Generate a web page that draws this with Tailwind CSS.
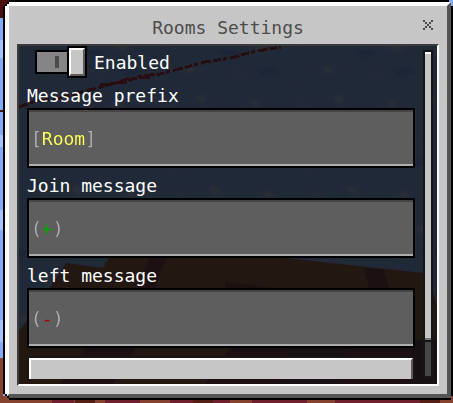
<!DOCTYPE html>
<html lang="en">
<head>
<meta charset="utf-8">
<title>Rooms Settings</title>
<script src="https://cdn.jsdelivr.net/npm/@tailwindcss/browser@4"></script>
</head>
<body class="relative h-screen overflow-hidden pl-[3px] pb-[3px] font-['DejaVu_Sans_Mono',monospace] text-[18px]">
  <!-- World behind the window -->
  <svg class="absolute inset-0 -z-10 h-full w-full" viewBox="0 0 453 403" preserveAspectRatio="none" shape-rendering="crispEdges" aria-hidden="true">
    <path fill="#80acf8" d="M0 0h453v403H0z"/>
    <path fill="#4a1010" d="M0 0h9v6H5v12H0zM0 110h3v2H0z"/>
    <path fill="#a5c4ff" d="M0 40h3v18H0zM0 135h3v12H0zM0 210h3v20H0zM0 320h3v22H0z"/>
    <path fill="#85432f" d="M0 358h3v38h450v7H0z"/>
    <path fill="#70202c" d="M52 400h22v3H52zM105 400h35v3h-35zM170 400h60v3h-60zM252 400h55v3h-55zM335 400h85v3h-85z"/>
    <path fill="#542016" d="M75 400h20v3H75zM193 400h20v3h-20zM420 400h20v3h-20z"/>
  </svg>

  <main class="h-full bg-black p-[2px] [clip-path:polygon(0_6px,2px_6px,2px_4px,4px_4px,4px_2px,6px_2px,6px_0,calc(100%-4px)_0,calc(100%-4px)_2px,calc(100%-2px)_2px,calc(100%-2px)_6px,100%_6px,100%_calc(100%-4px),calc(100%-2px)_calc(100%-4px),calc(100%-2px)_100%,6px_100%,6px_calc(100%-2px),4px_calc(100%-2px),4px_calc(100%-4px),2px_calc(100%-4px),2px_calc(100%-6px),0_calc(100%-6px))]">
    <div class="flex h-full flex-col border-4 border-t-white border-r-[#555] border-b-[#555] border-l-white bg-[#c6c6c6] px-2 pb-2 [clip-path:polygon(0_4px,2px_4px,2px_2px,4px_2px,4px_0,100%_0,100%_100%,4px_100%,4px_calc(100%-2px),2px_calc(100%-2px),2px_calc(100%-4px),0_calc(100%-4px))]">
      <header class="relative flex h-[38px] shrink-0 items-center justify-center pt-1 text-[#4c4c4c]">
        <h1>Rooms Settings</h1>
        <button type="button" aria-label="Close" class="absolute top-3 right-1 p-[2px]">
          <svg class="block size-[10px]" viewBox="0 0 5 5" fill="currentColor" shape-rendering="crispEdges" aria-hidden="true"><path d="M0 0h1v1H0zM4 0h1v1H4zM1 1h1v1H1zM3 1h1v1H3zM2 2h1v1H2zM1 3h1v1H1zM3 3h1v1H3zM0 4h1v1H0zM4 4h1v1H4z"/></svg>
        </button>
      </header>

      <section class="relative isolate flex min-h-0 flex-1 border-2 border-t-[#3b3b3b] border-r-white border-b-white border-l-[#3b3b3b] bg-[#1f2937] pb-[5px]">
        <svg class="absolute inset-0 -z-10 h-full w-full" viewBox="19 46 418 338" preserveAspectRatio="none" aria-hidden="true">
          <defs>
            <pattern id="ice" width="137" height="91" patternUnits="userSpaceOnUse" patternTransform="skewX(8)">
              <path fill="#232a37" d="M0 9l16-5 9 6-8 7-7-2zM38 0l8 4 12-2 6 8-10 6-13-5zM13 39l13-5 8 8-9 7-10-4zM62 31l9-4 7 6-8 8-9-4zM88 12l14-6 12 6-9 9-13-2zM100 45l16-6 14 8-12 8-15-3zM30 66l18-5 12 7-14 9-13-4zM78 70l12-5 15 6-10 9-14-2zM4 80l10-4 9 5-10 6z"/>
              <path fill="#292d36" d="M45 7l5-3 6 4-5 4zM17 41l5-3 5 4-4 3zM98 12l5-3 6 4-6 3zM110 47l6-3 6 4-6 3zM38 69l6-3 5 3-5 4z"/>
              <path fill="#1c2636" d="M12 20l18-3 12 6-16 5zM73 52l16-3 9 5-16 4zM108 70l18-3 8 5-17 5z"/>
            </pattern>
          </defs>
          <path fill="url(#ice)" d="M19 46h418v338H19z"/>
          <g fill="none" stroke="#270d10" shape-rendering="crispEdges">
            <path stroke-width="3" stroke-dasharray="9 3 5 2 12 4" d="M19 107L36 101 60 98 86 91 112 84 127 79 150 77"/>
            <path stroke-width="3" stroke-dasharray="8 2 4 3 10 2" d="M100 85L126 82 140 76 160 74 183 68 205 62 231 58 252 52 281 47"/>
          </g>
          <path fill="#231712" d="M19 331L27 321 50 288 66 263 103 268 109 258H285L423 273 433 293 437 305V384H19z"/>
          <path fill="#1d1012" d="M150 258h16l-11 30h-18zM364 268l20 2 5 18h-20zM225 282l50 6h-50zM85 348h50l-22 36H60zM230 348h207v36H205z"/>
          <path fill="#171014" d="M290 348h60l-12 36h-60zM415 340h22v44h-30z"/>
        </svg>

        <form class="min-w-0 flex-1 overflow-hidden pr-[22px] pl-2 text-white">
          <label class="relative flex h-8 items-center gap-[7px] pl-2">
            <input type="checkbox" role="switch" checked class="absolute h-8 w-[52px] opacity-0">
            <span class="flex items-center" aria-hidden="true">
              <span class="flex h-6 w-8 items-center justify-end border-2 border-r-0 border-black bg-[#858585] pr-2"><span class="h-3 w-1 bg-[#4a4a4a]"></span></span>
              <span class="h-8 w-5 border-2 border-black bg-[#c6c6c6]"><span class="block h-full border-2 border-t-white border-r-[#5b5b5b] border-b-[#5b5b5b] border-l-white"></span></span>
            </span>
            <span>Enabled</span>
          </label>

          <label for="prefix" class="block h-[30px] pt-[6px] leading-6">Message prefix</label>
          <div class="h-[60px] border-2 border-black bg-[#5e5e5e]">
            <div class="h-full border-t-2 border-b-2 border-t-[#464445] border-b-[#acacac] px-[2px]">
              <input id="prefix" type="text" value="[Room]" class="block h-full w-full bg-[linear-gradient(to_right,#acacac_1ch,#ffff55_1ch,#ffff55_5ch,#acacac_5ch)] bg-clip-text text-transparent caret-white outline-none">
            </div>
          </div>

          <label for="join" class="block h-[30px] pt-[6px] leading-6">Join message</label>
          <div class="h-[60px] border-2 border-black bg-[#5e5e5e]">
            <div class="h-full border-t-2 border-b-2 border-t-[#464445] border-b-[#acacac] px-[2px]">
              <input id="join" type="text" value="(+)" class="block h-full w-full bg-[linear-gradient(to_right,#acacac_1ch,#00aa00_1ch,#00aa00_2ch,#acacac_2ch)] bg-clip-text text-transparent caret-white outline-none">
            </div>
          </div>

          <label for="left" class="block h-[30px] pt-[6px] leading-6">left message</label>
          <div class="h-[60px] border-2 border-black bg-[#5e5e5e]">
            <div class="h-full border-t-2 border-b-2 border-t-[#464445] border-b-[#acacac] px-[2px]">
              <input id="left" type="text" value="(-)" class="block h-full w-full bg-[linear-gradient(to_right,#acacac_1ch,#aa0000_1ch,#aa0000_2ch,#acacac_2ch)] bg-clip-text text-transparent caret-white outline-none">
            </div>
          </div>

          <div class="mt-2 border-2 border-[#191616]">
            <button type="submit" aria-label="Submit" class="block h-14 w-full border-2 border-t-white border-r-[#5b5b5b] border-b-[#5b5b5b] border-l-white bg-[#c6c6c6]"></button>
          </div>
        </form>

        <!-- Scroll bar -->
        <div class="absolute top-1 right-1 bottom-[6px] flex w-[10px] flex-col border-2 border-[#171615] bg-[#464646]" aria-hidden="true">
          <div class="h-[89%] border-t-2 border-b-2 border-t-white border-b-[#777] bg-[#c6c6c6]"></div>
          <div class="h-[2px] bg-[#171615]"></div>
        </div>
      </section>
    </div>
  </main>
</body>
</html>
